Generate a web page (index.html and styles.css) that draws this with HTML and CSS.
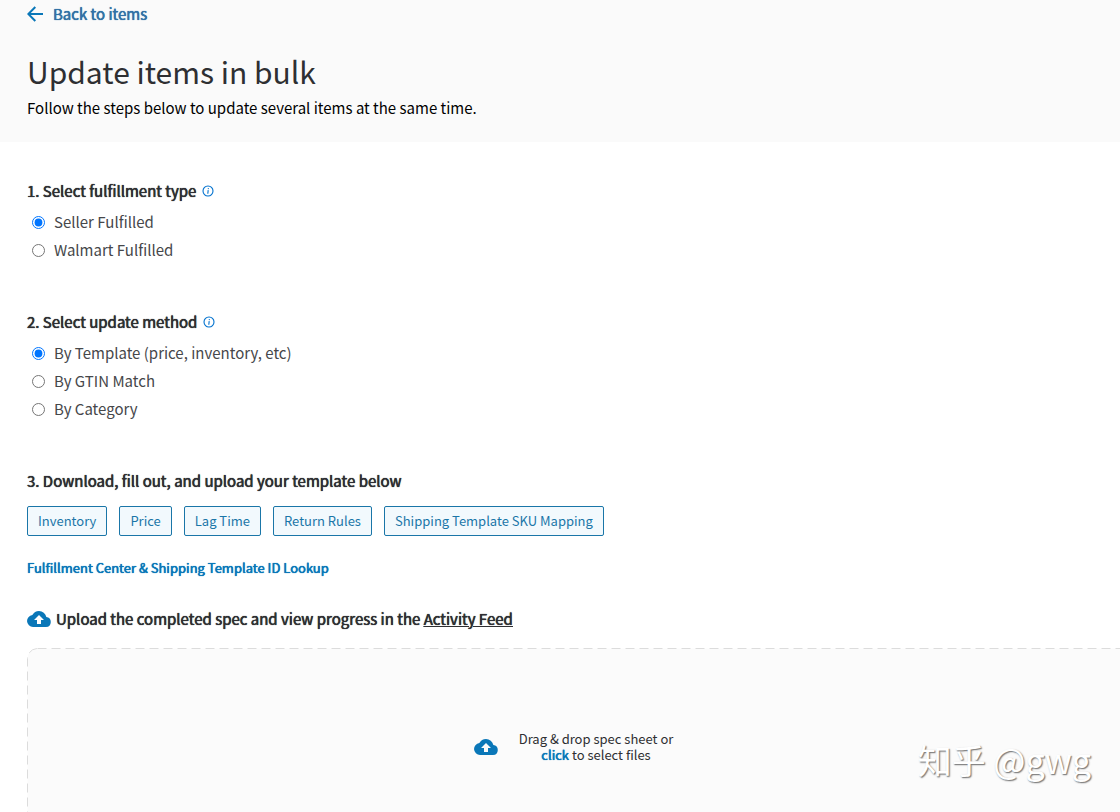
FILE: index.html
```html
<!DOCTYPE html>
<html lang="en">
<head>
<meta charset="UTF-8" />
<meta name="viewport" content="width=device-width, initial-scale=1" />
<title>Update items in bulk</title>
<link rel="stylesheet" href="styles.css">
</head>
<body>

<header class="page-header">
  <a class="back-link" href="#">
    <svg class="back-icon" viewBox="0 0 16 16" aria-hidden="true"><path d="M8.3 1 1.3 8l7 7M1.3 8H16" fill="none" stroke="currentColor" stroke-width="2"/></svg>
    Back to items
  </a>
  <h1>Update items in bulk</h1>
  <p class="subtitle">Follow the steps below to update several items at the same time.</p>
</header>

<main class="content">
  <fieldset class="step">
    <legend class="step-title">1. Select fulfillment type
      <svg class="info-icon" viewBox="0 0 12 12" aria-hidden="true"><circle cx="6" cy="6" r="5" fill="none" stroke="currentColor" stroke-width="1.1"/><path d="M6.2 5.1 5.8 8.7M6.4 3.1 6.3 4.1" stroke="currentColor" stroke-width="1.1"/></svg>
    </legend>
    <label class="option"><input type="radio" name="fulfillment" checked>Seller Fulfilled</label>
    <label class="option"><input type="radio" name="fulfillment">Walmart Fulfilled</label>
  </fieldset>

  <fieldset class="step">
    <legend class="step-title">2. Select update method
      <svg class="info-icon" viewBox="0 0 12 12" aria-hidden="true"><circle cx="6" cy="6" r="5" fill="none" stroke="currentColor" stroke-width="1.1"/><path d="M6.2 5.1 5.8 8.7M6.4 3.1 6.3 4.1" stroke="currentColor" stroke-width="1.1"/></svg>
    </legend>
    <label class="option"><input type="radio" name="method" checked>By Template (price, inventory, etc)</label>
    <label class="option"><input type="radio" name="method">By GTIN Match</label>
    <label class="option"><input type="radio" name="method">By Category</label>
  </fieldset>

  <section>
    <h2 class="step-title">3. Download, fill out, and upload your template below</h2>
    <div class="templates">
      <button type="button">Inventory</button>
      <button type="button">Price</button>
      <button type="button">Lag Time</button>
      <button type="button">Return Rules</button>
      <button type="button">Shipping Template SKU Mapping</button>
    </div>
    <a class="lookup" href="#">Fulfillment Center &amp; Shipping Template ID Lookup</a>

    <div class="upload-title">
      <svg class="cloud" viewBox="0 0 24 16" aria-hidden="true"><path d="M19.35 6.04A7.49 7.49 0 0 0 12 0C9.11 0 6.6 1.64 5.35 4.04A6 6 0 0 0 6 16h13a5 5 0 0 0 .35-9.96zM14 9v4h-4V9H7l5-5 5 5z" fill="currentColor"/></svg>
      <p>Upload the completed spec and view progress in the <a href="#">Activity Feed</a></p>
    </div>

    <div class="dropzone">
      <svg class="dropzone-border" aria-hidden="true"><rect x="0.5" y="0.5" width="100%" height="120%" rx="10" fill="#fbfbfb" stroke="#dcdcdc" stroke-dasharray="9 5"/></svg>
      <svg class="cloud" viewBox="0 0 24 16" aria-hidden="true"><path d="M19.35 6.04A7.49 7.49 0 0 0 12 0C9.11 0 6.6 1.64 5.35 4.04A6 6 0 0 0 6 16h13a5 5 0 0 0 .35-9.96zM14 9v4h-4V9H7l5-5 5 5z" fill="currentColor"/></svg>
      <p>Drag &amp; drop spec sheet or<br><a href="#">click</a> to select files</p>
    </div>
  </section>
</main>

<div class="watermark">知乎 @gwg</div>

</body>
</html>
```
FILE: styles.css
```css
* {
  box-sizing: border-box;
}
body {
  margin: 0;
  min-height: 100vh;
  overflow: hidden;
  font-family: 'Noto Sans CJK SC', 'Open Sans', sans-serif;
  font-size: 15px;
  line-height: 20px;
  color: #2e2f32;
  background: #fff;
}
h1, h2, p {
  margin: 0;
}
a {
  color: #0a77b8;
  text-decoration: none;
}
.page-header {
  height: 142px;
  padding: 4px 27px 0;
  background: #fafafa;
}
.back-link {
  display: flex;
  align-items: center;
  gap: 10px;
  width: max-content;
  color: #3172a6;
}
.back-icon {
  width: 16px;
  height: 16px;
  color: #0a77b8;
}
/* medium weight without the wider letters */
.back-link, .step-title, .lookup, .upload-title, .dropzone a {
  font-weight: 400;
  text-shadow: 0 0 0 currentColor, 0 0 1px currentColor;
}
h1 {
  margin-top: 27px;
  font-size: 30px;
  line-height: 40px;
  font-weight: 400;
}
.subtitle {
  margin-top: 7px;
  color: #000;
}
.content {
  padding: 39px 0 0 27px;
}
.step {
  margin: 0 0 48px;
  padding: 0;
  border: 0;
}
.step-title {
  display: flex;
  align-items: center;
  gap: 6px;
  margin-bottom: 7px;
  padding: 0;
  font-size: 15px;
  line-height: 20px;
}
.info-icon {
  width: 12px;
  height: 12px;
  color: #0071ce;
}
.option {
  display: flex;
  align-items: center;
  height: 28px;
  color: #46474a;
}
.option input {
  width: 13px;
  height: 13px;
  margin: 0 9px 0 5px;
}
.templates {
  display: flex;
  flex-wrap: wrap;
  gap: 12px;
  margin: 15px 0 22px;
}
.templates button {
  height: 30px;
  padding: 0 10px;
  border: 1px solid #1a76a8;
  border-radius: 2px;
  background: #f2f9fd;
  color: #1a76a8;
  font-family: inherit;
  font-size: 13px;
  line-height: 20px;
}
.lookup {
  display: block;
  width: max-content;
  font-size: 13px;
}
.upload-title {
  display: flex;
  align-items: center;
  gap: 5px;
  margin-top: 31px;
}
.upload-title a {
  color: inherit;
  text-decoration: underline;
}
.cloud {
  flex: none;
  width: 24px;
  height: 16px;
  color: #0a77b8;
}
.dropzone {
  position: relative;
  display: flex;
  align-items: center;
  justify-content: center;
  gap: 21px;
  height: 198px;
  margin-top: 19px;
  font-size: 13px;
  line-height: 16px;
  text-align: center;
}
/* wider than the window, so only the left corner shows */
.dropzone-border {
  position: absolute;
  top: 0;
  left: 0;
  z-index: -1;
  width: calc(100% + 20px);
  height: 100%;
}
.watermark {
  position: absolute;
  right: 29px;
  bottom: 27px;
  font-size: 34px;
  line-height: 50px;
  color: #fff;
  text-shadow: 1px 1px 1px #808080, 1px 1px 2px #b0b0b0;
}
```
